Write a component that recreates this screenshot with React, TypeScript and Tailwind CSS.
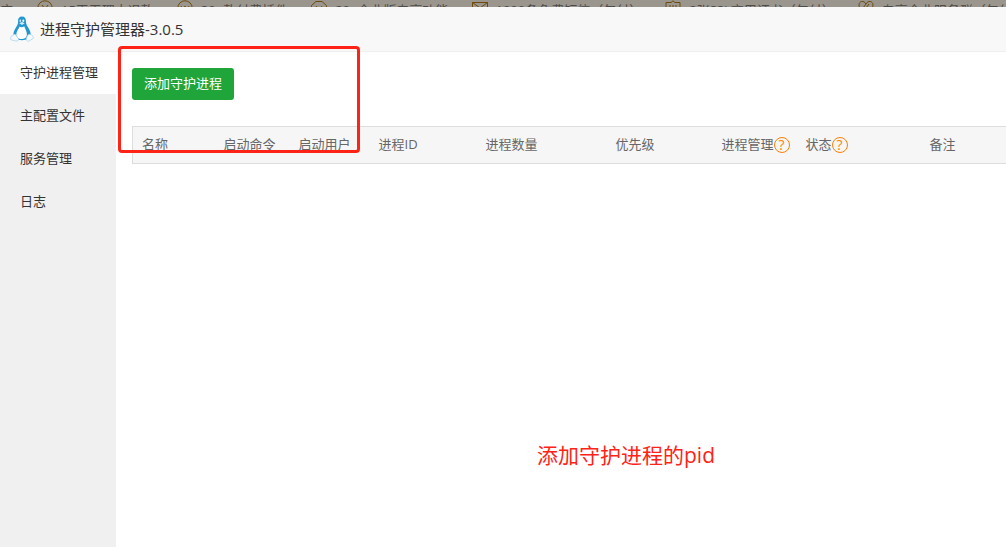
import React, { useState } from 'react';

type Column = { label: string; width?: string; help?: boolean };

const MENU = ['守护进程管理', '主配置文件', '服务管理', '日志'];

const COLUMNS: Column[] = [
    { label: '名称', width: 'w-[82px]' },
    { label: '启动命令', width: 'w-[75px]' },
    { label: '启动用户', width: 'w-[80px]' },
    { label: '进程ID', width: 'w-[107px]' },
    { label: '进程数量', width: 'w-[130px]' },
    { label: '优先级', width: 'w-[106px]' },
    { label: '进程管理', width: 'w-[84px]', help: true },
    { label: '状态', width: 'w-[124px]', help: true },
    { label: '备注' },
];

const PERKS = [
    { label: '15天无理由退款', icon: <><circle cx="8" cy="8" r="7.2" /><path d="M5 5l3 4 3-4M8 9v4M5.5 9h5" /></> },
    { label: '30+款付费插件', icon: <><circle cx="8" cy="8" r="7.2" /><path d="M4 6l2 4 2-4 2 4 2-4" /></> },
    { label: '20+企业版专享功能', icon: <><path d="M5 1.5h6l4.5 4v5l-4.5 4H5l-4.5-4v-5z" /><path d="M5 6l3 5 3-5" /></> },
    { label: '1000条免费短信（年付）', icon: <path d="M.5 2.500h15v11H.5zM.5 2.500L8 8l7.500-5.500" /> },
    { label: '2张SSL商用证书（年付）', icon: <><path d="M8 .8l2 1.700h5V9c0 3-3 5-7 6.500C4 14 1 12 1 9V2.500h5z" /><path d="M4 6h2M7 6h2M10 6h2M4 8h8" /></> },
    { label: '专享企业服务群（年付）', icon: <path d="M8 4C6 0 1 1 1 5c0 3 3 5 7 9 4-4 7-6 7-9 0-4-5-5-7-1L5 8M11 4L8 8" /> },
];

function PenguinLogo() {
    return (
        <svg viewBox="0 0 24 26" className="h-[26px] w-6 shrink-0" aria-hidden="true">
            <path
                d="M12 .5c-2.600 0-4 1.800-3.900 4.300.1 2.500-.2 3.700-1.700 5.900-1.700 2.500-3.100 5.300-3 8.200L6 22.500c3 2.300 9 2.300 12 0l2.700-3.600c.1-2.900-1.300-5.700-3-8.200-1.500-2.200-1.700-3.400-1.800-5.900C15.900 2.300 14.600.5 12 .5z"
                fill="#2296cf"
            />
            <path d="M9.600 10.500c1.200 1 3.200 1 4.600-.3 1 2.600 2.800 5 2.700 8.300-.1 3-2.300 4.500-5.300 4.500S6.300 21.500 6.300 18.500c0-3.300 2.300-5.300 3.300-8z" fill="#fff" />
            <ellipse cx="10.300" cy="4.800" rx=".8" ry="1.200" fill="#d7edf7" />
            <ellipse cx="13.300" cy="4.800" rx="1" ry="1.300" fill="#fff" />
            <path d="M9.200 7.200L12 6l2.600 1.200L12 9z" fill="#d7edf7" />
            <path d="M4 18.300l1.500.2 3 4.300c.4 1.500-1 2.600-2.700 2.200L1 23.800c-.9-.4-.3-1.500-.2-2.200 0-1 .2-1.600 1.400-1.600.8 0 1-1.500 1.800-1.700z" fill="#f4fafd" stroke="#9fcfe5" strokeWidth=".7" />
            <path d="M20 18.300l-1.800.2c-.8 1.500-1.800 3-2 4.500-.2 1.900 1.700 2.700 3.200 1.800l3.700-2.300c.8-.6.200-1.200-.3-1.900-.3-.7-.4-1.600-1.300-1.700z" fill="#f4fafd" stroke="#9fcfe5" strokeWidth=".7" />
        </svg>
    );
}

function HelpLink({ label }: { label: string }) {
    return (
        <a
            href="#help"
            title={label}
            className="inline-flex h-4 w-4 shrink-0 items-center justify-center rounded-full border border-[#ff7f00] text-[14px] leading-none text-[#ff7f00]"
        >
            ?
        </a>
    );
}

export default function App() {
    const [active, setActive] = useState(0);

    return (
        <div className="relative flex min-h-screen flex-col overflow-hidden bg-white font-['Open_Sans','Noto_Sans_CJK_SC',sans-serif] text-[13px] text-[#333]">

            {/* Dimmed page behind the dialog */}
            <div className="flex h-[7px] items-start gap-[23px] overflow-hidden bg-[#9a968e] text-[#4d4b48]">
                <span className="w-[14px] shrink-0 whitespace-nowrap leading-5">应</span>
                {PERKS.map((perk) => (
                    <div key={perk.label} className="flex shrink-0 items-start gap-2 whitespace-nowrap leading-5">
                        <svg viewBox="0 0 16 16" className="h-4 w-4 fill-none stroke-[#6e4a0c]" aria-hidden="true">
                            {perk.icon}
                        </svg>
                        {perk.label}
                    </div>
                ))}
            </div>

            {/* Title bar */}
            <header className="flex h-[45px] items-center gap-[6px] border-b border-[#eee] bg-[#f8f8f8] px-[10px]">
                <PenguinLogo />
                <h1 className="text-[15px] leading-5">进程守护管理器-3.0.5</h1>
            </header>

            <div className="flex flex-1">
                <nav className="flex w-[116px] shrink-0 flex-col gap-px bg-[#f0f0f0]">
                    {MENU.map((item, i) => (
                        <button
                            key={item}
                            type="button"
                            onClick={() => setActive(i)}
                            className={`h-[42px] whitespace-nowrap pl-5 text-left ${i === active ? 'bg-white' : ''}`}
                        >
                            {item}
                        </button>
                    ))}
                </nav>

                <main className="min-w-0 flex-1 overflow-hidden py-4 pl-4">
                    <button type="button" className="block h-8 rounded-[3px] bg-[#20a53a] px-3 text-white">
                        添加守护进程
                    </button>

                    <table className="mt-[26px] w-full table-fixed border-collapse border-y border-l border-[#ddd] text-left text-[#666]">
                        <thead className="bg-[#f6f6f6]">
                            <tr>
                                {COLUMNS.map((col) => (
                                    <th key={col.label} scope="col" className={`h-[37px] whitespace-nowrap p-0 pl-[9px] font-normal ${col.width ?? ''}`}>
                                        <span className="flex items-center">
                                            {col.label}
                                            {col.help && <HelpLink label={col.label} />}
                                        </span>
                                    </th>
                                ))}
                            </tr>
                        </thead>
                    </table>
                </main>
            </div>

            {/* Markup drawn over the window */}
            <div className="pointer-events-none absolute left-[118px] top-[46px] h-[107px] w-[242px] rounded-[4px] border-[3px] border-[#ff2216]" />
            <p className="pointer-events-none absolute left-[537px] top-[440px] whitespace-nowrap text-[21px] leading-[30px] text-[#ff2216]">
                添加守护进程的pid
            </p>
        </div>
    );
}
